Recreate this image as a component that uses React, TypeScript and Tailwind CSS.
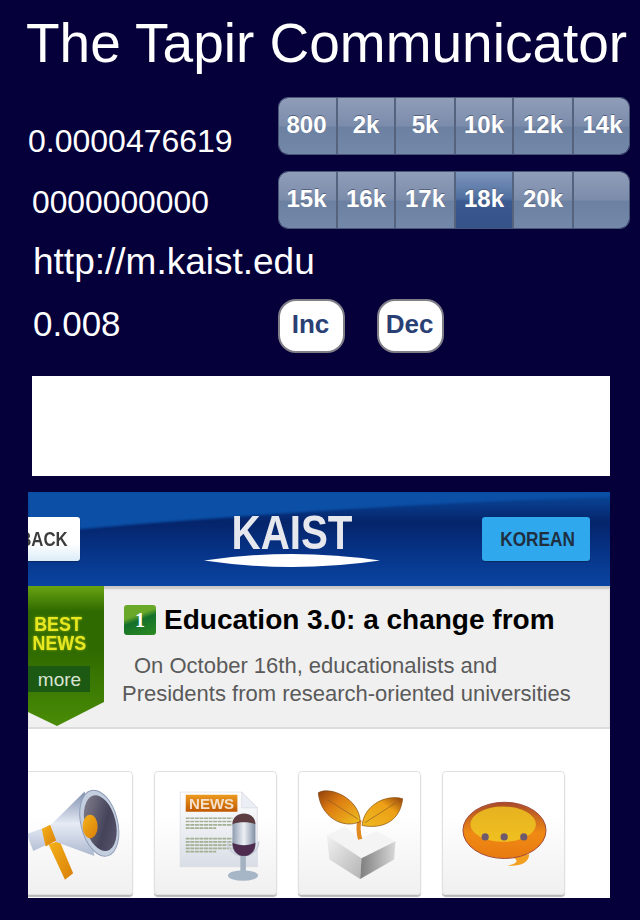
const row1 = ["800", "2k", "5k", "10k", "12k", "14k"];
const row2 = ["15k", "16k", "17k", "18k", "20k", ""];
const SELECTED = "18k";

const Segmented = ({ items }: { items: string[] }) => (
  <div className="grid h-[58px] w-[352px] grid-cols-[59px_58px_60px_58px_60px_57px] overflow-hidden rounded-[10px] border border-[#4a5878]">
    {items.map((item, i) => (
      <div
        key={i}
        className={`flex items-center justify-center pb-[2px] text-[24px] font-bold text-white [text-shadow:0_-1px_0_#55637f] ${
          i < 5 ? "border-r-2 border-[#55637f]" : ""
        } ${i === 0 ? "pr-[2px]" : ""} ${
          item === SELECTED
            ? "bg-[linear-gradient(#7d95bc_0%,#4f6e9f_48%,#3b5a90_52%,#34528a_100%)] border-[#2a4070]"
            : "bg-[linear-gradient(#8f9db9_0%,#7b8cab_50%,#6c81a2_52%,#7489a9_100%)]"
        }`}
      >
        {item}
      </div>
    ))}
  </div>
);

const RoundButton = ({ label }: { label: string }) => (
  <button className="flex h-[54px] w-[67px] items-center justify-center rounded-[18px] border-2 border-[#807f88] bg-white pb-[3px] pr-[2px] text-[26px] font-bold text-[#2a4075]">
    {label}
  </button>
);

const Card = ({ children }: { children: React.ReactNode }) => (
  <div className="h-[124px] w-[123px] shrink-0 overflow-hidden rounded-[4px] border border-[#e0e0e0] bg-[linear-gradient(#ffffff_35%,#f0f0f0_100%)] shadow-[0_2px_1px_#b8b8b8]">
    {children}
  </div>
);

const Megaphone = () => (
  <svg viewBox="-30 30 370 370" className="h-full w-full blur-[0.5px]">
    <defs>
      <linearGradient id="cone" x1="0" y1="0" x2="0" y2="1">
        <stop offset="0" stopColor="#7f8fae" />
        <stop offset="0.5" stopColor="#e6ebf5" />
        <stop offset="1" stopColor="#aeb9d0" />
      </linearGradient>
      <linearGradient id="orange" x1="0" y1="0" x2="1" y2="1">
        <stop offset="0" stopColor="#f5b21a" />
        <stop offset="1" stopColor="#d97f08" />
      </linearGradient>
      <linearGradient id="bell" x1="0" y1="0" x2="1" y2="1">
        <stop offset="0" stopColor="#8a8894" />
        <stop offset="0.6" stopColor="#45435a" />
        <stop offset="1" stopColor="#5c5a72" />
      </linearGradient>
    </defs>
    <path d="M85 250 L118 238 L160 338 L135 358 Z" fill="url(#orange)" />
    <path d="M195 88 L90 192 L18 218 L38 270 L102 240 L225 285 Z" fill="url(#cone)" />
    <path d="M64 203 L90 190 L108 238 L76 256 Z" fill="url(#orange)" />
    <ellipse cx="240" cy="185" rx="56" ry="103" transform="rotate(-14 240 185)" fill="#c3cede" stroke="#8f9db8" strokeWidth="3" />
    <ellipse cx="243" cy="185" rx="47" ry="87" transform="rotate(-14 243 185)" fill="url(#bell)" />
    <ellipse cx="212" cy="195" rx="23" ry="36" fill="url(#orange)" />
  </svg>
);

const NewsMic = () => (
  <svg viewBox="403 30 370 370" className="h-full w-full blur-[0.4px]">
    <defs>
      <linearGradient id="page" x1="0" y1="0" x2="0" y2="1">
        <stop offset="0" stopColor="#ffffff" />
        <stop offset="1" stopColor="#d9dde6" />
      </linearGradient>
      <linearGradient id="banner" x1="0" y1="0" x2="0" y2="1">
        <stop offset="0" stopColor="#ec9a20" />
        <stop offset="1" stopColor="#c05800" />
      </linearGradient>
      <linearGradient id="mic" x1="0" y1="0" x2="1" y2="0">
        <stop offset="0" stopColor="#8e9cb0" />
        <stop offset="0.5" stopColor="#eef1f6" />
        <stop offset="1" stopColor="#7f8ea4" />
      </linearGradient>
    </defs>
    <path d="M480 90 L668 90 L716 138 L716 318 L480 318 Z" fill="url(#page)" stroke="#d5d8e2" strokeWidth="2" />
    <path d="M668 90 L668 138 L716 138 Z" fill="#eceef5" stroke="#d5d8e2" strokeWidth="2" />
    <rect x="497" y="98" width="158" height="52" fill="url(#banner)" />
    <text x="576" y="141" textAnchor="middle" fontFamily="Liberation Sans, sans-serif" fontWeight="700" fontSize="46" fill="#f4e0cc">
      NEWS
    </text>
    {[170, 180, 190, 200, 232, 242, 252, 262, 272].map((y) => (
      <line key={y} x1="497" x2={y === 200 || y === 272 ? 590 : 640} y1={y} y2={y} stroke="#a3b094" strokeWidth="5" strokeDasharray="12 2" />
    ))}
    <path d="M625 240 C625 300 720 300 720 240" fill="none" stroke="#c9d0dc" strokeWidth="5" />
    <rect x="640" y="155" width="70" height="132" rx="34" fill="url(#mic)" />
    <path d="M640 188 C640 145 710 145 710 188 C690 180 660 180 640 188 Z" fill="#5d3d42" />
    <path d="M640 245 C660 255 690 255 710 245 C710 300 640 300 640 245 Z" fill="#4e2c50" />
    <rect x="664" y="285" width="17" height="50" fill="#a4b2c2" />
    <ellipse cx="672" cy="345" rx="46" ry="16" fill="#a6b6c6" />
  </svg>
);

const Plant = () => (
  <svg viewBox="25 30 370 370" className="h-full w-full blur-[0.4px]">
    <defs>
      <linearGradient id="leafA" x1="0" y1="0" x2="1" y2="1">
        <stop offset="0" stopColor="#8f3f0c" />
        <stop offset="0.4" stopColor="#dd7d12" />
        <stop offset="1" stopColor="#f0c020" />
      </linearGradient>
      <linearGradient id="leafB" x1="1" y1="0" x2="0" y2="1">
        <stop offset="0" stopColor="#8f3f0c" />
        <stop offset="0.35" stopColor="#eda016" />
        <stop offset="1" stopColor="#eeb820" />
      </linearGradient>
      <linearGradient id="faceL" x1="0" y1="0" x2="1" y2="1">
        <stop offset="0" stopColor="#f2f2f2" />
        <stop offset="1" stopColor="#b4b4b4" />
      </linearGradient>
      <linearGradient id="faceR" x1="0" y1="0" x2="1" y2="0">
        <stop offset="0" stopColor="#7e7e7e" />
        <stop offset="1" stopColor="#d8d8d8" />
      </linearGradient>
    </defs>
    <path d="M110 222 L165 195 L212 232 L262 210 L320 240 L216 292 Z" fill="#f4f4f4" />
    <path d="M110 222 L216 292 L212 356 L118 296 Z" fill="url(#faceL)" />
    <path d="M216 292 L320 240 L316 296 L212 356 Z" fill="url(#faceR)" />
    <path d="M210 175 C204 200 208 220 212 234" fill="none" stroke="#e08a20" strokeWidth="13" />
    <path d="M84 92 C120 70 210 110 212 180 C160 205 90 165 84 92 Z" fill="url(#leafA)" stroke="#7a4010" strokeWidth="2" />
    <path d="M342 110 C285 95 222 135 218 192 C285 205 335 175 342 110 Z" fill="url(#leafB)" stroke="#8a5010" strokeWidth="2" />
    <path d="M110 112 L205 172 M322 122 L226 184" stroke="#8a5a28" strokeWidth="2" fill="none" />
  </svg>
);

const Bubble = () => (
  <svg viewBox="458 30 370 370" className="h-full w-full blur-[0.4px]">
    <defs>
      <linearGradient id="body" x1="0" y1="0" x2="0" y2="1">
        <stop offset="0" stopColor="#a84a28" />
        <stop offset="0.55" stopColor="#f08a14" />
        <stop offset="1" stopColor="#e87a10" />
      </linearGradient>
      <linearGradient id="glow" x1="0" y1="0" x2="0" y2="1">
        <stop offset="0" stopColor="#e6b220" />
        <stop offset="1" stopColor="#f0c020" />
      </linearGradient>
    </defs>
    <path d="M668 285 C690 300 690 305 655 316 C700 316 720 305 722 280 Z" fill="#f3a020" />
    <ellipse cx="646" cy="207" rx="127" ry="86" fill="url(#body)" stroke="#a04838" strokeWidth="3" />
    <ellipse cx="642" cy="188" rx="100" ry="54" fill="url(#glow)" />
    {[587, 645, 705].map((x) => (
      <circle key={x} cx={x} cy="227" r="11" fill="#6e5a6c" />
    ))}
  </svg>
);

export default function App() {
  return (
    <div className="h-[920px] w-[640px] overflow-hidden bg-[#05003a] font-['Liberation_Sans',sans-serif] text-white">
      <h1 className="pl-[26px] pt-[13px] text-[55px] leading-[60px] whitespace-nowrap">The Tapir Communicator</h1>

      <div className="mt-6 flex flex-col gap-4 pl-[278px]">
        <Segmented items={row1} />
        <Segmented items={row2} />
      </div>

      <div className="-mt-[116px] w-[270px] text-[32px] leading-[36px]">
        <div className="pl-7 pt-[10px]">0.0000476619</div>
        <div className="pl-[32px] pt-[25px] text-[31.8px]">0000000000</div>
        <div className="pl-[33px] pt-6 text-[37px] whitespace-nowrap">http://m.kaist.edu</div>
      </div>

      <div className="mt-[19px] flex items-center">
        <div className="w-[278px] pl-[33px] pb-1 text-[35px] leading-[40px]">0.008</div>
        <div className="flex gap-8">
          <RoundButton label="Inc" />
          <RoundButton label="Dec" />
        </div>
      </div>

      <div className="ml-8 mt-[23px] h-[100px] w-[578px] bg-white" />

      <div className="ml-7 mt-4 h-[406px] w-[582px] overflow-hidden bg-white">
        <div className="relative flex h-[94px] items-center justify-between bg-[linear-gradient(#0a4a9e_0%,#05246a_32%,#062f80_55%,#0a44a2_100%)] pr-5">
          <svg viewBox="0 0 582 94" className="absolute inset-0 h-full w-full blur-[1px]" preserveAspectRatio="none">
            <path d="M0 0 L582 0 L582 5 C400 10 180 25 0 42 Z" fill="#0b4fa6" />
          </svg>
          <div className="relative flex h-11 w-[52px] items-center justify-end overflow-hidden rounded-r-[3px] bg-[linear-gradient(#ffffff_60%,#dcecf8_100%)] pr-3 shadow-[0_1px_1px_#0a2a60]">
            <span className="inline-block origin-right scale-x-[0.8] text-[21px] font-bold text-[#3c3c3c]">BACK</span>
          </div>
          <div className="relative flex h-[73px] w-[176px] translate-x-[11px] flex-col items-center pt-[9px]">
            <span className="inline-block scale-x-[0.84] text-[48px] font-bold leading-[42px] text-[#e6e8ee]">KAIST</span>
            <svg viewBox="0 0 176 13" className="h-[13px] w-[176px]">
              <path d="M0 6.5 Q88 -6.5 176 6.5 Q88 19.5 0 6.5 Z" fill="#ffffff" />
            </svg>
          </div>
          <div className="relative flex h-11 w-[108px] items-center justify-center rounded-[3px] bg-[#2fa8ee] shadow-[0_1px_1px_#0a2a60]">
            <span className="inline-block translate-x-[2px] scale-x-[0.82] text-[21px] font-bold text-[#1f2f3f]">KOREAN</span>
          </div>
        </div>

        <div className="relative flex h-[143px] border-b-2 border-[#dcdcdc] bg-[#f0f0f0] shadow-[inset_0_3px_2px_#c8c8c8]">
          <div className="relative h-[141px] w-[76px] shrink-0 bg-[linear-gradient(#6aa312_0%,#2f6a00_18%,#2f6a00_45%,#4a8c06_100%)] [clip-path:polygon(0_0,100%_0,100%_116px,29px_140px,0_126px)]">
            <div className="w-[60px] pt-[28px] text-center text-[21px] font-bold leading-[19px] text-[#e8e820] [text-shadow:0_0_3px_#a0b010]">
              <div className="scale-x-[0.85] whitespace-nowrap">BEST</div>
              <div className="scale-x-[0.85] whitespace-nowrap">NEWS</div>
            </div>
            <div className="mt-[14px] flex h-[26px] w-[62px] items-center justify-center bg-[#1c5a14] pl-[1px] text-[19px] leading-none text-[#dbe4d4]">
              more
            </div>
          </div>
          <div className="pl-5 pt-[17px]">
            <div className="flex items-center gap-2">
              <div className="flex h-[30px] w-8 items-center justify-center rounded-[3px] bg-[linear-gradient(160deg,#6aa82a_0%,#6aa82a_35%,#14702a_50%,#2c8a20_100%)] font-['Liberation_Serif',serif] text-[20px] font-bold text-white">
                1
              </div>
              <div className="text-[28px] font-bold leading-[34px] whitespace-nowrap text-black">Education 3.0: a change from</div>
            </div>
            <div className="-ml-[2px] mt-[15px] text-[22px] leading-[28px] whitespace-nowrap text-[#5a5a5a]">
              <div className="pl-3">On October 16th, educationalists and</div>
              <div>Presidents from research-oriented universities</div>
            </div>
          </div>
        </div>

        <div className="mt-[42px] -ml-[18px] flex gap-[21px]">
          <Card>
            <Megaphone />
          </Card>
          <Card>
            <NewsMic />
          </Card>
          <Card>
            <Plant />
          </Card>
          <Card>
            <Bubble />
          </Card>
        </div>
      </div>
    </div>
  );
}
